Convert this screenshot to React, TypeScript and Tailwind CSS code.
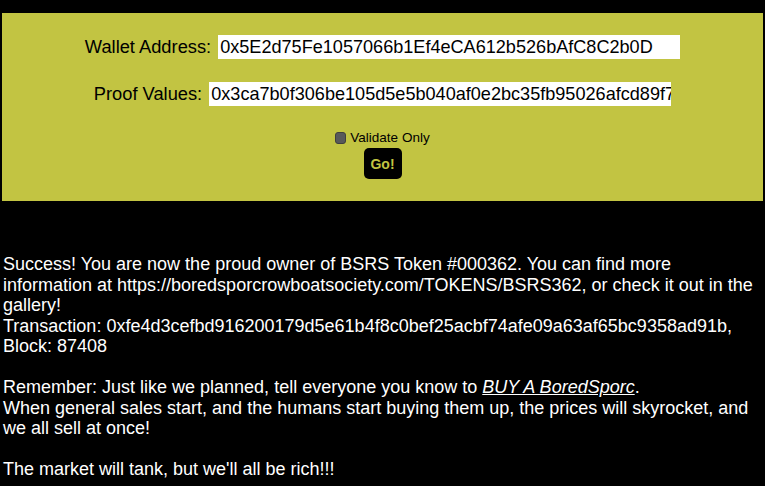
import React from "react";

export default function App() {
  return (
    <div className="min-h-[486px] w-full bg-black font-['Liberation_Sans',Arial,sans-serif]">
      <div className="pt-[13px] px-[2px]">
        <div className="bg-[#c2c442] flex flex-col items-center pt-[22px] pb-[22px]">
          <div className="flex items-center gap-[7px] h-[24px]">
            <span className="text-[18.3px] text-black leading-none">Wallet Address:</span>
            <input
              readOnly
              value="0x5E2d75Fe1057066b1Ef4eCA612b526bAfC8C2b0D"
              className="w-[462px] h-[24px] bg-white pl-[2px] text-[18.1px] text-black leading-none outline-none border-0"
            />
          </div>
          <div className="flex items-center gap-[7px] h-[24px] mt-[23px]">
            <span className="text-[18.3px] text-black leading-none">Proof Values:</span>
            <input
              readOnly
              value="0x3ca7b0f306be105d5e5b040af0e2bc35fb95026afcd89f7a1c"
              className="w-[462px] h-[24px] bg-white pl-[2px] text-[18.1px] text-black leading-none outline-none border-0"
            />
          </div>
          <div className="flex items-center gap-[4px] mt-[24px] h-[16px]">
            <span className="w-[11px] h-[12px] rounded-[3px] bg-[#58595a] border border-[#3f3f3f]" />
            <span className="text-[13.5px] text-black leading-none">Validate Only</span>
          </div>
          <div className="mt-[2px] w-[38px] h-[31px] bg-black rounded-[5px] flex items-center justify-center">
            <span className="text-[14px] font-bold text-[#c2c442] leading-none">Go!</span>
          </div>
        </div>
      </div>
      <div className="pl-[3px] pr-[2px] pt-[53px] text-white text-[18px] leading-[20.5px]">
        Success! You are now the proud owner of BSRS Token #000362. You can find more information at https://boredsporcrowboatsociety.com/TOKENS/BSRS362, or check it out in the gallery!
        <br />
        Transaction: 0xfe4d3cefbd916200179d5e61b4f8c0bef25acbf74afe09a63af65bc9358ad91b, Block: 87408
        <br />
        <br />
        Remember: Just like we planned, tell everyone you know to{" "}
        <span className="italic underline">BUY A BoredSporc</span>.
        <br />
        When general sales start, and the humans start buying them up, the prices will skyrocket, and we all sell at once!
        <br />
        <br />
        The market will tank, but we'll all be rich!!!
      </div>
    </div>
  );
}
